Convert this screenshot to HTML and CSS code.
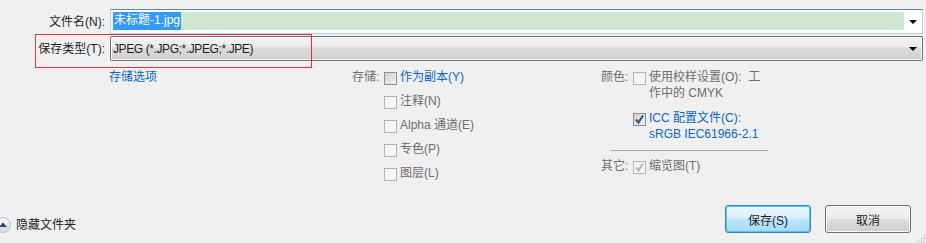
FILE: index.html
```html
<!DOCTYPE html>
<html lang="zh-CN">
<head>
	<meta charset="utf-8">
	<title>存储为</title>
	<link rel="stylesheet" href="styles.css">
</head>
<body>

<div class="fields">
	<div class="row">
		<label class="lbl">文件名(N):</label>
		<div class="input">
			<span class="inner"><span class="sel">未标题-1.jpg</span><span class="hl"></span></span>
			<span class="drop"><i class="tri"></i></span>
		</div>
	</div>
	<div class="row">
		<label class="lbl">保存类型(T):</label>
		<div class="combo">
			<span class="val">JPEG (*.JPG;*.JPEG;*.JPE)</span>
			<span class="drop"><i class="tri"></i></span>
		</div>
	</div>
	<div class="mark"></div>
</div>

<div class="opts">
	<div><span class="link">存储选项</span></div>

	<div class="group">
		<div class="item">
			<span class="glbl">存储:</span>
			<span class="cb on"></span>
			<span class="txt blue">作为副本(Y)</span>
		</div>
		<div class="item"><span class="glbl"></span><span class="cb"></span><span class="txt">注释(N)</span></div>
		<div class="item"><span class="glbl"></span><span class="cb"></span><span class="txt">Alpha 通道(E)</span></div>
		<div class="item"><span class="glbl"></span><span class="cb"></span><span class="txt">专色(P)</span></div>
		<div class="item"><span class="glbl"></span><span class="cb"></span><span class="txt">图层(L)</span></div>
	</div>

	<div class="group color">
		<div class="item">
			<span class="glbl">颜色:</span>
			<span class="cb"></span>
			<span class="txt">使用校样设置(O):&nbsp; 工<br>作中的 CMYK</span>
		</div>
		<div class="item icc">
			<span class="glbl"></span>
			<span class="cb on"><svg width="11" height="11" viewBox="0 0 11 11"><path d="M2 5.5 L4.5 8.5 L9 1.5" fill="none" stroke="#2c4f8e" stroke-width="2"/></svg></span>
			<span class="txt blue">ICC 配置文件(C):<br>sRGB IEC61966-2.1</span>
		</div>
		<div class="sep"></div>
		<div class="item">
			<span class="glbl">其它:</span>
			<span class="cb"><svg width="11" height="11" viewBox="0 0 11 11"><path d="M2 5.5 L4.5 8.5 L9 1.5" fill="none" stroke="#b4b4b4" stroke-width="2"/></svg></span>
			<span class="txt">缩览图(T)</span>
		</div>
	</div>
</div>

<div class="foot">
	<div class="folders">
		<svg class="ico" width="16" height="16" viewBox="0 0 16 16">
			<defs>
				<linearGradient id="g" x1="0" y1="0" x2="0" y2="1">
					<stop offset="0" stop-color="#fdfdfd"/>
					<stop offset="1" stop-color="#cfd6e2"/>
				</linearGradient>
			</defs>
			<circle cx="8" cy="8" r="7.5" fill="url(#g)" stroke="#b9c1cf"/>
			<path d="M4 10 L8 5.5 L12 10 Z" fill="#2d4372"/>
		</svg>
		<span>隐藏文件夹</span>
	</div>
	<div class="btns">
		<button class="btn def">保存(S)</button>
		<button class="btn">取消</button>
	</div>
</div>
<div class="grip"></div>

</body>
</html>
```

FILE: styles.css
```css
html, body {margin:0; padding:0;}
body {
	width:926px; height:243px; overflow:hidden;
	background:#f0f0f0; color:#1e1e1e;
	font:12px/16px "Liberation Sans", "Noto Sans CJK SC", sans-serif;
	display:flex; flex-direction:column; position:relative;
}

/* top fields */
.fields {position:relative; padding-top:9px; display:flex; flex-direction:column; gap:2px;}
.row {display:grid; grid-template-columns:110px 813px; align-items:center;}
.lbl {text-align:right; padding-right:5px;}
.input {
	height:25px; box-sizing:border-box; display:flex;
	background:#fff; border:1px solid #b7cfe6; border-top-color:#5b87aa;
	padding:2px 0 3px 2px;
}
.inner {flex:1; display:flex;}
.sel {background:#3399ff; color:#fff; padding:0 1px; line-height:17px;}
.hl {flex:1; background:#cde8cf;}
.drop {width:18px; display:flex; align-items:center; justify-content:center;}
.tri {display:block; width:0; height:0; border:4px solid transparent; border-top:4px solid #000; border-bottom:0; margin-top:1px;}
.combo {
	height:25px; box-sizing:border-box; display:flex; align-items:center;
	border:1px solid #707070; border-radius:2px;
	background:linear-gradient(#f2f2f2, #ebebeb 45%, #dcdcdc 46%, #cfcfcf);
	box-shadow:inset 0 0 0 1px #f8f8f8;
	padding-left:2px;
}
.combo .val {flex:1; letter-spacing:-0.4px;}
.combo .drop {height:100%;}
.mark {position:absolute; left:35px; top:34px; width:275px; height:32px; border:1px solid #e4353d;}

/* options */
.opts {display:grid; grid-template-columns:243px 249px 1fr; padding-left:109px; margin-top:8px;}
.link {color:#0a66c8;}
.group {display:flex; flex-direction:column;}
.item {display:flex; align-items:flex-start; margin-bottom:8px; color:#6d6d6d;}
.glbl {width:32px; flex:none;}
.cb {
	width:13px; height:13px; box-sizing:border-box; flex:none; margin-top:3px; margin-right:3px;
	border:1px solid #b4b4b4; background:#f7f7f7;
	display:flex; align-items:center; justify-content:center;
}
.cb.on {border-color:#8e8f8f; background:linear-gradient(135deg, #cfd1d4, #f2f2f3);}
.cb svg {display:block;}
.blue {color:#0a66c8;}
.color .item {margin-bottom:0;}
.color .txt {width:116px;}
.icc {margin-top:9px;}
.sep {margin:8px 0 7px 9px; width:158px; height:1px; background:#a9a9a9;}

/* footer */
.foot {margin-top:auto; padding:0 15px 10px 0; display:flex; align-items:center; justify-content:space-between;}
.folders {display:flex; align-items:center; gap:5px; margin-left:-5px; margin-top:11px;}
.ico {display:block;}
.btns {display:flex; gap:14px;}
.btn {
	width:86px; height:28px; box-sizing:border-box;
	font:12px "Liberation Sans", "Noto Sans CJK SC", sans-serif; color:#1e1e1e;
	border:1px solid #707070; border-radius:3px;
	background:linear-gradient(#f2f2f2, #ebebeb 48%, #dddddd 50%, #cfcfcf);
	box-shadow:inset 0 0 0 1px #fbfbfb;
}
.btn.def {
	border-color:#3c7fb1;
	background:linear-gradient(#eaf6fd, #d9f0fc 48%, #bee6fd 50%, #a7d9f5);
	box-shadow:inset 0 0 0 1px #48cbf7;
}
.grip {
	position:absolute; right:1px; bottom:1px; width:8px; height:8px;
	background:radial-gradient(circle, #c2c2c2 0.8px, transparent 1.2px) 0 0/3px 3px;
	clip-path:polygon(100% 0, 100% 100%, 0 100%);
}
```
